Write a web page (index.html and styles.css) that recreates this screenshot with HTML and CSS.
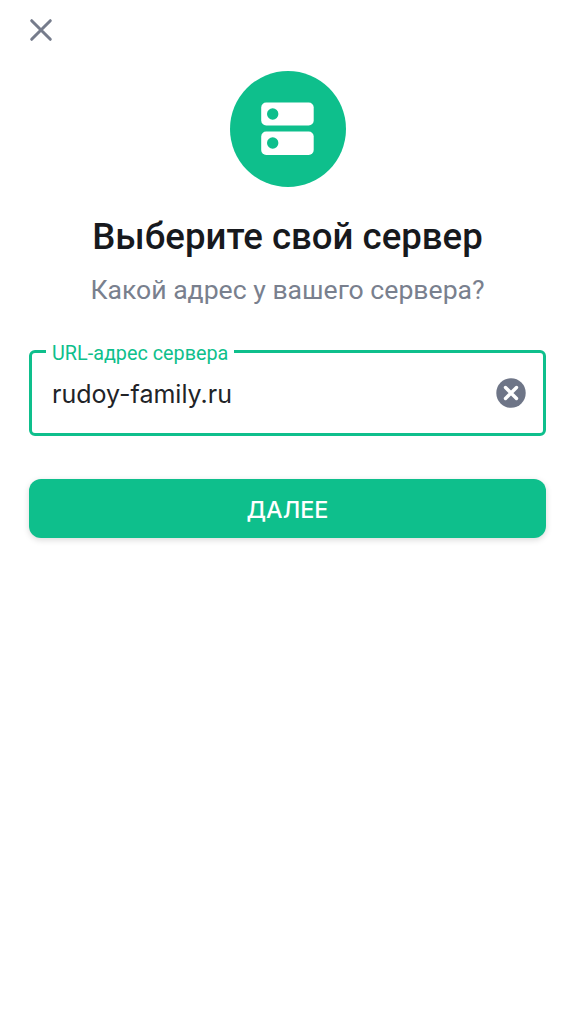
FILE: index.html
```html
<!DOCTYPE html>
<html lang="ru">
<head>
  <meta charset="UTF-8">
  <title>Выберите свой сервер</title>
  <link rel="stylesheet" href="styles.css">
</head>
<body>

  <div class="page">

    <button class="close" aria-label="Закрыть">
      <svg width="24" height="24" viewBox="0 0 24 24">
        <path d="M2.7 2.7L21.3 21.3M21.3 2.7L2.7 21.3" stroke="#767c8c" stroke-width="3" stroke-linecap="round" fill="none"/>
      </svg>
    </button>

    <div class="logo">
      <svg width="54" height="54" viewBox="0 0 54 54">
        <rect x="0.2" y="0.5" width="52.5" height="23" rx="5" fill="#fff"/>
        <rect x="0.2" y="29.5" width="52.5" height="23.5" rx="5" fill="#fff"/>
        <circle cx="11.7" cy="12" r="5.7" fill="#0ebf8c"/>
        <circle cx="11.7" cy="41" r="5.7" fill="#0ebf8c"/>
      </svg>
    </div>

    <h1>Выберите свой сервер</h1>
    <p class="subtitle">Какой адрес у вашего сервера?</p>

    <div class="field">
      <span class="field-label">URL-адрес сервера</span>
      <span class="field-value">rudoy-family.ru</span>
      <svg class="clear" width="30" height="30" viewBox="0 0 30 30">
        <circle cx="15" cy="15" r="14.7" fill="#6e7587"/>
        <path d="M9.5 9.5L20.5 20.5M20.5 9.5L9.5 20.5" stroke="#fff" stroke-width="3.4" stroke-linecap="round" fill="none"/>
      </svg>
    </div>

    <button class="next">ДАЛЕЕ</button>

  </div>

</body>
</html>
```

FILE: styles.css
```css
html, body {
  margin: 0;
  padding: 0;
  background: #fff;
}
body {
  font-family: Roboto, "Noto Sans", sans-serif;
}
.page {
  height: 1023px;
  box-sizing: border-box;
  padding: 18px 29px 0;
  display: flex;
  flex-direction: column;
  align-items: center;
}
.close {
  align-self: flex-start;
  width: 24px;
  height: 24px;
  padding: 0;
  border: none;
  background: none;
  display: flex;
}
.logo {
  width: 116px;
  height: 116px;
  margin-top: 29px;
  border-radius: 50%;
  background: #0ebf8c;
  display: flex;
  align-items: center;
  justify-content: center;
}
h1 {
  margin: 28px 0 0;
  font-size: 36.6px;
  line-height: 44px;
  font-weight: 500;
  color: #17191d;
}
.subtitle {
  margin: 14px 0 0;
  font-size: 26.6px;
  line-height: 34px;
  color: #79808e;
}
.field {
  position: relative;
  width: 100%;
  height: 86px;
  margin-top: 43px;
  box-sizing: border-box;
  border: 3px solid #0ebf8c;
  border-radius: 6px;
  padding: 0 17px 0 20px;
  display: flex;
  align-items: center;
  justify-content: space-between;
}
.field-label {
  position: absolute;
  top: -10px;
  left: 14px;
  padding: 0 6px;
  background: #fff;
  font-size: 19.8px;
  line-height: 22px;
  color: #0ebf8c;
}
.field-value {
  padding-top: 2px;
  font-family: Inter, Roboto, sans-serif;
  font-size: 25px;
  color: #212327;
}
.next {
  width: 100%;
  height: 59px;
  margin-top: 43px;
  padding: 2px 0 0;
  border: none;
  border-radius: 12px;
  background: #0ebf8c;
  box-shadow: 0 2px 6px rgba(0,0,0,0.15);
  color: #fff;
  font-family: Inter, Roboto, sans-serif;
  font-size: 23.4px;
  font-weight: 500;
}
```
